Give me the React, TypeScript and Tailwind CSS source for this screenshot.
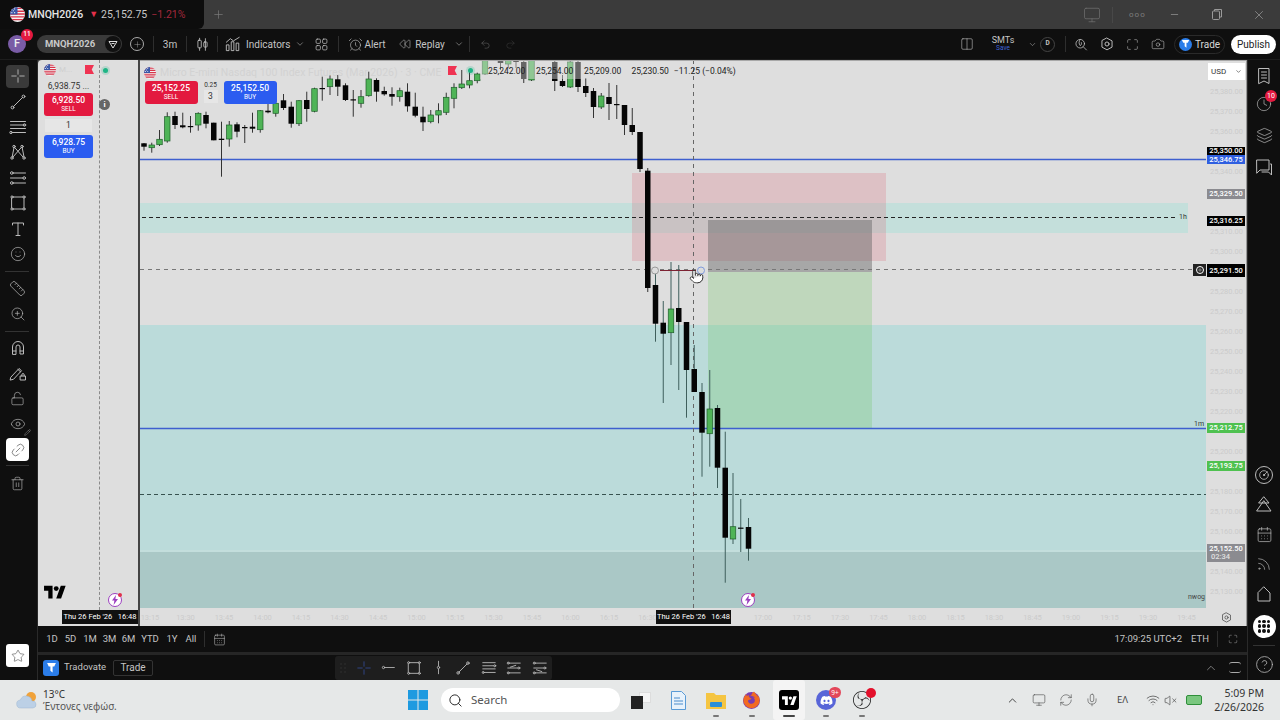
import type { ReactNode } from "react";
import {
  AlarmClock,
  CalendarDays,
  Camera,
  ChevronDown,
  ChevronUp,
  CircleHelp,
  Clock,
  Columns2,
  Eye,
  Layers,
  LockOpen,
  Maximize,
  Mic,
  Minus,
  Pencil,
  Pointer,
  Plus,
  Redo2,
  Rss,
  Ruler,
  Search,
  Smile,
  Star,
  Trash2,
  Undo2,
  VolumeX,
  Wifi,
  X,
  ZoomIn,
  Link2,
  Rewind,
  Monitor,
  RefreshCw,
} from "lucide-react";
import { SiObsstudio } from "react-icons/si";
import { FaDiscord, FaFirefoxBrowser } from "react-icons/fa";

// [index, bodyTop, bodyBottom, wickTop, wickBottom, colour]
type Bar = [number, number, number, number, number, "k" | "g"];

const bars: Bar[] = [
  [0, 143.3, 146.7, 143, 150.7, "k"],
  [1, 145, 147.7, 142.7, 152.7, "g"],
  [2, 139.3, 144.7, 130, 146, "g"],
  [3, 116.7, 141, 112.3, 142.7, "g"],
  [4, 116, 125, 111.7, 129, "k"],
  [5, 125.3, 127.3, 112.7, 128.3, "k"],
  [6, 126, 126.7, 116, 132.7, "k"],
  [7, 113.3, 125, 112.3, 130.7, "g"],
  [8, 115, 123.7, 111.7, 128.3, "k"],
  [9, 122.7, 140.3, 122.7, 140.3, "k"],
  [10, 138.7, 140, 121.7, 176.7, "k"],
  [11, 125, 139, 121, 146.7, "g"],
  [12, 124.3, 131.7, 122.3, 137.3, "k"],
  [13, 127, 128, 125, 143, "k"],
  [14, 126.7, 128.7, 112.7, 132.7, "k"],
  [15, 110.7, 129.7, 110, 132.7, "g"],
  [16, 110.7, 112.3, 103.3, 113.3, "k"],
  [17, 103.3, 113.3, 93.3, 116.7, "g"],
  [18, 100.3, 108, 94, 110, "k"],
  [19, 106.7, 123.7, 101.7, 127.7, "k"],
  [20, 100.7, 123.7, 100, 126, "g"],
  [21, 100, 109, 91.7, 121.7, "k"],
  [22, 88.7, 111.3, 87.7, 112.3, "g"],
  [23, 88, 88.7, 76.7, 100.7, "k"],
  [24, 79, 86.7, 75, 95, "g"],
  [25, 79.3, 86.7, 75, 96, "k"],
  [26, 85.3, 100, 83.3, 101, "k"],
  [27, 99.3, 100, 90, 116.7, "k"],
  [28, 96.7, 103.3, 90, 107.7, "g"],
  [29, 79, 95.7, 71.7, 96.7, "g"],
  [30, 80, 91.7, 78.3, 101.7, "k"],
  [31, 91, 94.3, 86.7, 95.7, "k"],
  [32, 94, 96.7, 87.3, 105.7, "k"],
  [33, 90.7, 96.7, 87.7, 101.7, "g"],
  [34, 91.7, 106.3, 83.3, 111.7, "k"],
  [35, 106.7, 115.7, 92.7, 117.3, "k"],
  [36, 116.7, 122.3, 106.7, 131, "k"],
  [37, 115, 121.7, 110, 123.3, "g"],
  [38, 110.7, 115, 103.3, 123.3, "g"],
  [39, 97.3, 112.3, 92.7, 115, "g"],
  [40, 87.3, 98.3, 83.3, 108.3, "g"],
  [41, 84, 87.7, 70, 89, "g"],
  [42, 80.7, 85, 69.3, 88.3, "g"],
  [43, 74, 80.7, 72.7, 83.3, "g"],
  [44, 55, 74, 55, 75, "g"],
  [46, 55, 63, 55, 70, "k"],
  [47, 55, 64, 55, 68, "g"],
  [48, 55, 62, 55, 68, "k"],
  [49, 62, 79, 55, 83, "k"],
  [50, 55, 80, 55, 81, "g"],
  [53, 62, 81, 55, 91, "k"],
  [54, 81, 86, 75, 87, "k"],
  [55, 62, 87, 55, 88, "g"],
  [56, 62, 87, 55, 92, "k"],
  [57, 86, 93, 78, 97, "k"],
  [58, 91, 107, 88, 118, "k"],
  [59, 96, 107, 93, 109, "g"],
  [60, 97, 104, 83, 120, "k"],
  [61, 104, 105, 85, 119, "k"],
  [62, 105, 125, 105, 135, "k"],
  [63, 125, 132, 108, 135, "k"],
  [64, 132, 169, 132, 172, "k"],
  [65, 170.7, 288, 168, 292, "k"],
  [66, 285, 323.7, 270, 341.7, "k"],
  [67, 322.7, 333.7, 301, 403, "k"],
  [68, 309, 332.7, 262, 365, "g"],
  [69, 308, 322, 265, 390, "k"],
  [70, 322, 370, 322, 417.7, "k"],
  [71, 369, 392, 345, 392, "k"],
  [72, 392, 432.7, 383, 476.7, "k"],
  [73, 409, 433.7, 370, 466.7, "g"],
  [74, 408, 467.7, 405, 488, "k"],
  [75, 467.7, 537.7, 431.7, 582.7, "k"],
  [76, 526.7, 539, 473, 544, "g"],
  [77, 527.6, 528.4, 499, 552, "k"],
  [78, 527, 548.7, 518, 560.7, "k"],
];

const priceY = (p: number) => 270 + (25291.5 - p) * 2;

const axisTags = [
  { text: "25,350.00", price: 25351.25, h: 8, bg: "bg-black" },
  { text: "25,346.75", price: 25346.75, h: 9, bg: "bg-[#2f5fe0]" },
  { text: "25,329.50", price: 25329.5, h: 10, bg: "bg-[#8b8b90]" },
  { text: "25,316.25", price: 25316.25, h: 10, bg: "bg-black" },
  { text: "25,291.50", price: 25291.25, h: 13, bg: "bg-black" },
  { text: "25,212.75", price: 25212.75, h: 10, bg: "bg-[#4fc150]" },
  { text: "25,193.75", price: 25193.75, h: 10, bg: "bg-[#4fc150]" },
];

const axisTicks = Array.from({ length: 26 }, (_, k) => 92 + k * 20).filter(
  (y) => !axisTags.some((t) => Math.abs(priceY(t.price) - y) < 11) && Math.abs(y - 553) > 11,
);

const timeTicks = ["13:15", "13:30", "13:45", "14:00", "14:15", "14:30", "14:45", "15:00", "15:15", "15:30", "15:45", "16:00", "16:15", "16:30", "", "", "17:00", "17:15", "17:30", "17:45", "18:00", "18:15", "18:30", "18:45", "19:00", "19:15", "19:30", "19:45"];

function Ico({ children, w = 18, h = 18, sw = 1 }: { children: ReactNode; w?: number; h?: number; sw?: number }) {
  return (
    <svg width={w} height={h} viewBox="0 0 18 18" fill="none" stroke="currentColor" strokeWidth={sw} strokeLinecap="round" strokeLinejoin="round">
      {children}
    </svg>
  );
}

function SettingsHex({ size = 14 }: { size?: number }) {
  return (
    <Ico w={size} h={size} sw={1.2}>
      <path d="M9 1.5 15.5 5v8L9 16.5 2.5 13V5z" />
      <circle cx="9" cy="9" r="2.6" />
    </Ico>
  );
}

function TvLogo({ size = 20, className }: { size?: number; className?: string }) {
  return (
    <svg width={size} height={size * 0.72} viewBox="0 0 36 26" className={className} fill="currentColor">
      <path d="M14 24H7V11H0V3h14v21zM28 24h-8l7.5-21h8L28 24z" />
      <circle cx="20" cy="7.5" r="4" />
    </svg>
  );
}

function UsFlag({ size = 12 }: { size?: number }) {
  return (
    <svg width={size} height={size} viewBox="0 0 16 16" className="rounded-full shrink-0">
      <rect width="16" height="16" fill="#f3f3f3" />
      <path d="M0 1.5h16M0 4.5h16M0 7.5h16M0 10.5h16M0 13.5h16" stroke="#d8344a" strokeWidth="1.5" />
      <rect width="8" height="8" fill="#3a58a8" />
      <path d="M2 2h.01M5 2h.01M3.5 4h.01M2 6h.01M5 6h.01" stroke="#fff" strokeWidth="1.2" strokeLinecap="round" />
    </svg>
  );
}

function RedFlag() {
  return (
    <svg width="9" height="9" viewBox="0 0 10 10" className="shrink-0">
      <path d="M0 0h10L7.5 5 10 10H0z" fill="#ef3352" />
    </svg>
  );
}

function LiveDot() {
  return <span className="block w-[5px] h-[5px] rounded-full bg-[#1fb585] ring-2 ring-[#1fb585]/20 shrink-0" />;
}

function BoltBadge() {
  return (
    <span className="relative w-[14px] h-[14px] rounded-full bg-white border border-[#9c3fc0] flex items-center justify-center">
      <svg width="8" height="10" viewBox="0 0 8 10" fill="#9c3fc0">
        <path d="M5 0 1 5.6h2.4L2.6 10 7 4H4.4z" />
      </svg>
      <span className="absolute -top-[1px] -right-[1px] w-[4px] h-[4px] rounded-full bg-[#e0304c]" />
    </span>
  );
}

function Divider() {
  return <span className="block w-px h-[16px] bg-[#2e2e2e] shrink-0" />;
}

function TitleBar() {
  return (
    <div className="h-[29px] flex bg-[#3b3b3b] shrink-0">
      <div className="w-[204px] bg-[#0d0d0d] rounded-br-[6px] flex items-center pl-[10px] text-[10.5px]">
        <UsFlag size={15} />
        <span className="ml-[3px] font-medium text-[#e4e4e4]">MNQH2026</span>
        <span className="ml-[6px] text-[#e5304a] text-[9px]">▼</span>
        <span className="ml-[3px] text-[#c8c8c8]">25,152.75</span>
        <span className="ml-[4px] text-[#a3283c]">−1.21%</span>
      </div>
      <div className="w-[28px] flex items-center justify-center text-[#7c7c7c]">
        <Plus size={13} strokeWidth={1.25} />
      </div>
      <div className="ml-auto flex items-center text-[#9a9a9a]">
        <Monitor size={18} strokeWidth={1} className="text-[#6f6f6f]" />
        <span className="w-px h-[16px] bg-[#484848] ml-[11px]" />
        <span className="w-[20px] ml-[16px] text-[8px] tracking-[1px] text-[#7d7d7d]">ooo</span>
        <span className="w-[43px] ml-[20px]">
          <Minus size={11} strokeWidth={1.5} />
        </span>
        <span className="w-[40px]">
          <svg width="10" height="11" viewBox="0 0 10 11" fill="none" stroke="currentColor">
            <rect x="0.5" y="2" width="7" height="8.5" rx="1" />
            <path d="M2.5 2V.5h7V8H8" />
          </svg>
        </span>
        <span className="w-[28px]">
          <X size={14} strokeWidth={1.25} />
        </span>
      </div>
    </div>
  );
}

function TopBar() {
  return (
    <div className="h-[31px] flex items-center shrink-0 bg-[#0f0f0f] text-[10px] text-[#c4c4c4] border-b border-[#1d1d1d]">
      <div className="relative ml-[8px] w-[18px] h-[18px] rounded-full bg-[#7a5ca6] flex items-center justify-center text-[11px] font-medium text-[#eee]">
        F
        <span className="absolute -top-[6px] -right-[7px] w-[12px] h-[12px] rounded-full bg-[#e3193f] text-white text-[6.5px] flex items-center justify-center">11</span>
      </div>
      <div className="ml-[11px] w-[85px] h-[18px] rounded-full bg-[#3a3a3a] flex items-center pl-[8px] pr-[1px] justify-between font-bold text-[#c9c9c9] text-[9.5px]">
        MNQH2026
        <span className="w-[16px] h-[16px] rounded-full bg-[#111] flex items-center justify-center">
          <svg width="10" height="9" viewBox="0 0 10 9" fill="none" stroke="#ddd" strokeWidth="1">
            <path d="M1 1.5h8L5 8zM3.5 3.5h3" />
          </svg>
        </span>
      </div>
      <span className="ml-[8px] w-[14px] h-[14px] rounded-full border border-[#aaa] flex items-center justify-center">
        <Plus size={9} strokeWidth={1} />
      </span>
      <span className="ml-[9px]"><Divider /></span>
      <span className="w-[32px] text-center">3m</span>
      <Divider />
      <span className="w-[30px] flex justify-center">
        <Ico w={15} h={15}>
          <rect x="3.5" y="4" width="4" height="9" rx="0.8" />
          <path d="M5.5 1.5V4M5.5 13v3M12.5 2v14" />
          <rect x="10.5" y="6" width="4" height="6" rx="0.8" />
        </Ico>
      </span>
      <Divider />
      <span className="ml-[7px] w-[16px]">
        <Ico w={16} h={16}>
          <path d="M1.5 16V10h3v6zM7 16V6.5h3V16zM12.5 16V8h3v8z" />
          <path d="M1.5 7 6 3l3.5 2.5L16 1.5" />
        </Ico>
      </span>
      <span className="ml-[5px] w-[41px] text-center">Indicators</span>
      <span className="ml-[8px] w-[13px]"><ChevronDown size={10} strokeWidth={1.25} /></span>
      <span className="ml-[7px] w-[14px]">
        <Ico w={13} h={13}>
          <rect x="1.5" y="1.5" width="6" height="6" rx="1.6" />
          <rect x="10.5" y="1.5" width="6" height="6" rx="1.6" />
          <rect x="1.5" y="10.5" width="6" height="6" rx="1.6" />
          <rect x="10.5" y="10.5" width="6" height="6" rx="1.6" />
        </Ico>
      </span>
      <span className="ml-[9px]"><Divider /></span>
      <span className="ml-[9px] w-[16px]"><AlarmClock size={15} strokeWidth={1} /></span>
      <span className="w-[22px] text-center">Alert</span>
      <span className="ml-[13px] w-[12px]"><Rewind size={12} strokeWidth={1.1} /></span>
      <span className="ml-[2.5px] w-[33px] text-center">Replay</span>
      <span className="ml-[7.5px] w-[15px]"><ChevronDown size={10} strokeWidth={1.25} /></span>
      <Divider />
      <span className="ml-[10px] w-[25px] text-[#777]"><Undo2 size={11} strokeWidth={1} /></span>
      <span className="w-[12px] text-[#444]"><Redo2 size={11} strokeWidth={1} /></span>

      <div className="ml-auto flex items-center">
        <Columns2 size={14} strokeWidth={1} />
        <div className="ml-[17px] w-[24px] flex flex-col items-center leading-[8px]">
          <span className="text-[9px]">SMTs</span>
          <span className="text-[6.5px] text-[#3f62d8]">Save</span>
        </div>
        <span className="ml-[13px]"><ChevronDown size={9} strokeWidth={1.25} /></span>
        <span className="ml-[3px] w-[15px] h-[15px] rounded-full border border-[#444] flex items-center justify-center text-[6.5px] font-bold">D</span>
        <span className="ml-[10px]"><Divider /></span>
        <span className="ml-[8px]">
          <Ico w={14} h={15}>
            <circle cx="8" cy="8" r="5.5" />
            <path d="m12 12 4 4M8 2.5c-2 2.5-2 5.5 0 8 1.500-1 2-2.500 1.500-4" />
          </Ico>
        </span>
        <span className="ml-[12px]"><SettingsHex /></span>
        <span className="ml-[12px]"><Maximize size={13} strokeWidth={1} /></span>
        <span className="ml-[12px]"><Camera size={14} strokeWidth={1} /></span>
        <div className="ml-[9px] w-[51px] h-[19px] rounded-full border border-[#2a2a2a] flex items-center pl-[4px] gap-[3px] text-[#d8d8d8]">
          <TradovateMark size={13} />
          Trade
        </div>
        <div className="ml-[6px] mr-[4px] w-[45px] h-[19px] rounded-full bg-white text-[#222] flex items-center justify-center">Publish</div>
      </div>
    </div>
  );
}

function TradovateMark({ size }: { size: number }) {
  return (
    <span className="rounded-full bg-[#2b7de9] flex items-center justify-center shrink-0" style={{ width: size, height: size }}>
      <svg width={size * 0.7} height={size * 0.7} viewBox="0 0 10 10" fill="#fff">
        <path d="M1 1h8L7.5 4H6v5.5L4 8V4H2.5z" />
      </svg>
    </span>
  );
}

function ToolBtn({ children, active }: { children: ReactNode; active?: "dark" | "white" }) {
  return (
    <div className="w-[35px] h-[25.4px] flex items-center justify-center text-[#bcbcbc]">
      {active ? (
        <div className={`w-[23px] h-[23px] rounded-[4px] flex items-center justify-center ${active === "dark" ? "bg-[#3a3a3a]" : "bg-white text-[#666]"}`}>{children}</div>
      ) : (
        children
      )}
    </div>
  );
}

function LeftTools() {
  return (
    <div className="w-[38px] shrink-0 bg-[#0f0f0f] flex flex-col items-start pt-[3.5px] border-r border-[#2a2a2a]">
      <ToolBtn active="dark">
        <Ico w={16} h={16}>
          <path d="M9 2v5M9 11v5M2 9h5M11 9h5" />
        </Ico>
      </ToolBtn>
      <ToolBtn>
        <Ico>
          <circle cx="3.5" cy="14.5" r="1.4" />
          <circle cx="14.5" cy="3.5" r="1.4" />
          <path d="M4.500 13.500l9-9" />
        </Ico>
      </ToolBtn>
      <ToolBtn>
        <Ico>
          <path d="M1.5 3.5h15M1.5 7h14M1.5 10.5h15M3.500 14.500h13" />
          <circle cx="2" cy="14.5" r="1.2" />
          <circle cx="15.5" cy="7" r="1.2" />
        </Ico>
      </ToolBtn>
      <ToolBtn>
        <Ico>
          <circle cx="3" cy="15" r="1.2" />
          <circle cx="5" cy="3.5" r="1.2" />
          <circle cx="13" cy="3.5" r="1.2" />
          <circle cx="15" cy="15" r="1.2" />
          <path d="M3.2 13.800 5 4.700M5.700 4.500 14 14M12.300 4.500 4 14M13.200 4.700 15 13.800" />
        </Ico>
      </ToolBtn>
      <ToolBtn>
        <Ico>
          <circle cx="2.8" cy="4" r="1.3" />
          <circle cx="15.2" cy="9" r="1.3" />
          <circle cx="2.8" cy="14" r="1.3" />
          <path d="M4 4h12.500M1.500 9H14M4 14h12.500" />
        </Ico>
      </ToolBtn>
      <ToolBtn>
        <Ico>
          <rect x="3" y="3" width="12" height="12" />
          <circle cx="3" cy="3" r="1.1" fill="#0f0f0f" />
          <circle cx="15" cy="3" r="1.1" fill="#0f0f0f" />
          <circle cx="3" cy="15" r="1.1" fill="#0f0f0f" />
          <circle cx="15" cy="15" r="1.1" fill="#0f0f0f" />
        </Ico>
      </ToolBtn>
      <ToolBtn>
        <Ico>
          <path d="M3.500 5V3h11v2M9 3v12.500M7 15.500h4" />
        </Ico>
      </ToolBtn>
      <ToolBtn><Smile size={16} strokeWidth={1} /></ToolBtn>
      <div className="ml-[5px] mt-[4px] w-[24px] h-px bg-[#333]" />
      <div className="mt-[4.5px]">
        <ToolBtn><Ruler size={17} strokeWidth={1} /></ToolBtn>
      </div>
      <ToolBtn><ZoomIn size={16} strokeWidth={1} /></ToolBtn>
      <div className="ml-[5px] mt-[4px] w-[24px] h-px bg-[#333]" />
      <div className="mt-[3.5px]">
        <ToolBtn>
          <Ico>
            <path d="M3.500 15V8a5.500 5.500 0 0 1 11 0v7h-3.500V8a2 2 0 0 0-4 0v7zM3.500 12H7M11 12h3.500" />
          </Ico>
        </ToolBtn>
      </div>
      <ToolBtn>
        <Ico>
          <path d="m2 13 8-8.500 2.500 2.200-8 8.600-3 .7zM9 5.500l2.500 2.300" />
          <rect x="11.5" y="12" width="5" height="4" />
          <path d="M12.800 12v-1.200a1.200 1.200 0 0 1 2.400 0V12" />
        </Ico>
      </ToolBtn>
      <ToolBtn><LockOpen size={15} strokeWidth={1} /></ToolBtn>
      <ToolBtn>
        <div className="relative">
          <Eye size={16} strokeWidth={1} />
          <Pencil size={7} strokeWidth={1.25} className="absolute -bottom-[4px] -right-[5px]" />
        </div>
      </ToolBtn>
      <ToolBtn active="white"><Link2 size={16} strokeWidth={1.1} className="-rotate-45" /></ToolBtn>
      <div className="ml-[6px] mt-[3px] w-[23px] h-px bg-[#333]" />
      <div className="mt-[4.5px]">
        <ToolBtn><Trash2 size={15} strokeWidth={1} /></ToolBtn>
      </div>
      <div className="mt-auto mb-[13px] ml-[6px] w-[23px] h-[23px] rounded-[3px] bg-white flex items-center justify-center text-[#444]">
        <Star size={14} strokeWidth={1} />
      </div>
    </div>
  );
}

function MiniPanel() {
  return (
    <div className="relative w-[100px] shrink-0 bg-[#dedede] rounded-tl-[4px] overflow-hidden">
      <div className="absolute left-[61px] top-0 bottom-[16px] border-l border-dashed border-[#8a8a8a]" />
      <div className="relative flex flex-col items-center w-[61px]">
        <div className="w-full h-[19px] pl-[6px] pr-[5px] flex items-center">
          <UsFlag size={12} />
          <span className="ml-[3px] text-[8px] text-[#cfcfcf]">M...</span>
          <span className="ml-auto"><RedFlag /></span>
        </div>
        <div className="h-[14px] text-[8.5px] text-[#333] flex items-center">6,938.75 ...</div>
        <div className="w-[49px] h-[23px] rounded-[3px] bg-[#e3193f] text-white flex flex-col items-center justify-center leading-[9px]">
          <span className="text-[8.5px] font-medium">6,928.50</span>
          <span className="text-[6.5px]">SELL</span>
        </div>
        <div className="my-[3px] w-[47px] h-[13px] bg-[#e6e6e6] text-[8.5px] text-[#333] flex items-center justify-center">1</div>
        <div className="w-[49px] h-[23px] rounded-[3px] bg-[#2b5cf0] text-white flex flex-col items-center justify-center leading-[9px]">
          <span className="text-[8.5px] font-medium">6,928.75</span>
          <span className="text-[6.5px]">BUY</span>
        </div>
      </div>
      <div className="absolute left-[65px] top-[8px]"><LiveDot /></div>
      <div className="absolute left-[61px] top-[39px] w-[11px] h-[11px] rounded-full bg-[#666] text-white text-[8px] font-bold leading-none flex items-center justify-center">i</div>
      <div className="absolute left-[6px] bottom-[26px] text-black"><TvLogo size={22} /></div>
      <div className="absolute left-[70px] bottom-[19px]"><BoltBadge /></div>
      <div className="absolute left-[24px] right-0 bottom-[2px] h-[14px] bg-[#111] text-white text-[7.5px] flex items-center justify-center whitespace-pre">Thu 26 Feb '26   16:48</div>
    </div>
  );
}

function ChartCanvas() {
  return (
    <svg className="absolute inset-0" width="1107" height="566" viewBox="140 60 1107 566">
      <rect x="140" y="203" width="1048" height="30" fill="#c4dfdb" />
      <rect x="140" y="325" width="1066" height="227" fill="#bbdbda" />
      <rect x="140" y="552" width="1066" height="56" fill="#aac8c6" />
      <rect x="140" y="550" width="1066" height="2" fill="#c3dedc" />
      <rect x="632" y="173" width="254" height="88" fill="rgba(220,90,110,0.22)" />
      <rect x="708" y="220" width="164" height="52" fill="rgba(100,100,100,0.45)" />
      <rect x="708" y="272" width="164" height="156" fill="rgba(120,200,110,0.3)" />
      <path d="M140 159.5H1206M140 428.5H1206" stroke="#3e5fcf" strokeWidth="1.3" />
      <path d="M142 217.5H1176" stroke="#222" strokeDasharray="4 3" />
      <path d="M140 269.5H1193" stroke="#777" strokeDasharray="4 4" />
      <path d="M140 494.5H1206" stroke="#37524f" strokeDasharray="4 3" />
      <path d="M693.5 60V609" stroke="#666" strokeDasharray="4 4" />
      {bars.map(([i, top, bottom, wTop, wBot, c]) => {
        const x = 144 + i * 7.75;
        return (
          <g key={i}>
            <path d={`M${x} ${wTop}V${wBot}`} stroke={wBot > 300 ? "#3f5f5c" : "#333"} strokeWidth="1" />
            <rect
              x={x - 2.75}
              y={top}
              width="5.5"
              height={Math.max(bottom - top, 1.2)}
              fill={c === "g" ? "#4fb457" : "#050505"}
              stroke={c === "g" ? "#1e5f2a" : "none"}
              strokeWidth="0.7"
            />
          </g>
        );
      })}
      {/* legend backdrop fades the candles behind the values */}
      <rect x="480" y="60" width="125" height="19" fill="rgba(222,222,222,0.45)" />
      <path d="M140 60.5H1247" stroke="#a8a8a8" />
      <path d="M660 270.5H696" stroke="#7d2333" strokeWidth="1.2" />
      <circle cx="655" cy="270.5" r="3.5" fill="#ddd" stroke="#999" />
      <circle cx="701" cy="270.5" r="3.5" fill="#ddd" stroke="#7f9bdc" />
    </svg>
  );
}

function MainChart() {
  return (
    <div className="relative flex-1 bg-[#dedede] overflow-hidden border-r border-[#9a9a9a]">
      <ChartCanvas />

      {/* legend */}
      <div className="absolute left-[4px] top-[5px] w-[336px] flex items-center text-[10.5px] text-[#d2d2d2] whitespace-nowrap">
        <UsFlag size={12} />
        <span className="ml-[4px]">Micro E-mini Nasdaq 100 Index Futures (Mar 2026) · 3 · CME</span>
      </div>
      <div className="absolute left-[308px] top-[6px]"><RedFlag /></div>
      <div className="absolute left-[328px] top-[8px]"><LiveDot /></div>
      <div className="absolute left-[348px] top-[5px] h-[12px] flex items-center text-[8.5px] text-[#222] whitespace-nowrap">
        <span className="w-[48px]">25,242.00</span>
        <span className="w-[48px]">25,254.00</span>
        <span className="w-[47.5px]">25,209.00</span>
        <span>25,230.50</span>
        <span className="ml-[5px]">−11.25 (−0.04%)</span>
      </div>

      {/* order buttons */}
      <div className="absolute left-[4.5px] top-[21px] flex items-start">
        <div className="w-[53px] h-[23px] rounded-[3px] bg-[#e3193f] text-white flex flex-col items-center justify-center leading-[9px]">
          <span className="text-[8.5px] font-medium">25,152.25</span>
          <span className="text-[6.5px]">SELL</span>
        </div>
        <div className="w-[26px] flex flex-col items-center leading-none text-[#333]">
          <span className="text-[6.5px] h-[9px] flex items-center">0.25</span>
          <span className="w-[14px] h-[13px] bg-[#e6e6e6] text-[8.5px] flex items-center justify-center">3</span>
        </div>
        <div className="w-[53px] h-[23px] rounded-[3px] bg-[#2b5cf0] text-white flex flex-col items-center justify-center leading-[9px]">
          <span className="text-[8.5px] font-medium">25,152.50</span>
          <span className="text-[6.5px]">BUY</span>
        </div>
      </div>

      {/* price axis */}
      <div className="absolute left-[1068px] top-[3px] w-[37px] h-[17px] bg-white text-[#333] text-[8px] flex items-center justify-between px-[3px]">
        USD
        <ChevronDown size={7} />
      </div>
      {axisTicks.map((y) => (
        <span
          key={y}
          className="absolute left-[1068px] w-[37px] text-center text-[7.5px] leading-[10px] text-[#cbcbcb]"
          style={{ top: y - 65 }}
        >
          25,{380 - ((y - 92) / 20) * 10}.00
        </span>
      ))}
      {axisTags.map((t) => (
        <span
          key={t.text}
          className={`absolute left-[1067px] w-[38px] flex items-center justify-center text-[7.5px] font-medium text-white ${t.bg}`}
          style={{ top: priceY(t.price) - 60 - t.h / 2, height: t.h }}
        >
          {t.text}
        </span>
      ))}
      <span className="absolute left-[1067px] top-[484px] w-[38px] h-[18px] bg-[#8b8b90] text-white text-[7.5px] font-medium flex flex-col items-center justify-center leading-[8.5px]">
        25,152.50
        <span className="w-full pl-[4px] text-[#e0e0e0]">02:34</span>
      </span>
      <span className="absolute left-[1053px] top-[204px] w-[13px] h-[12px] bg-[#222] text-white flex items-center justify-center">
        <span className="w-[8px] h-[8px] rounded-full border border-white flex items-center justify-center">
          <Plus size={6} strokeWidth={1.5} />
        </span>
      </span>
      <span className="absolute left-[1039px] top-[152px] text-[7px] text-[#333]">1h</span>
      <span className="absolute left-[1054px] top-[359px] text-[7px] text-[#333]">1m</span>
      <span className="absolute left-[1048px] top-[532px] text-[7px] text-[#444]">nwog</span>

      {/* cursor */}
      <Pointer size={15} strokeWidth={1.25} fill="#fff" className="absolute left-[549px] top-[209px] text-[#111]" />
      <div className="absolute left-[601px] top-[533px]"><BoltBadge /></div>

      {/* time axis */}
      {timeTicks.map((t, k) => (
        <span
          key={k}
          className="absolute top-[552px] w-[24px] text-center text-[7.5px] text-[#cbcbcb]"
          style={{ left: Math.max(k * 38.5 - 5, -2) }}
        >
          {t}
        </span>
      ))}
      <div className="absolute left-[516px] top-[550px] w-[75px] h-[14px] bg-[#111] text-white text-[7.5px] flex items-center justify-center whitespace-pre">Thu 26 Feb '26   16:48</div>
      <span className="absolute left-[1081px] top-[552px] text-[#444]"><SettingsHex size={11} /></span>
    </div>
  );
}

function RangeBar() {
  const ranges = [
    ["1D", "w-[18px]"],
    ["5D", "w-[19px]"],
    ["1M", "w-[20px]"],
    ["3M", "w-[19px]"],
    ["6M", "w-[19px]"],
    ["YTD", "w-[24px]"],
    ["1Y", "w-[20px]"],
    ["All", "w-[18px]"],
  ];
  return (
    <div className="h-[26px] flex items-center text-[9.5px] text-[#c4c4c4] pl-[5px] pr-[7px]">
      {ranges.map(([r, w]) => (
        <span key={r} className={`${w} text-center`}>{r}</span>
      ))}
      <span className="ml-[4px]"><Divider /></span>
      <span className="ml-[8px]"><CalendarDays size={13} strokeWidth={1} /></span>
      <span className="ml-auto">17:09:25 UTC+2</span>
      <span className="ml-[9px]">ETH</span>
      <span className="ml-[8px]"><Divider /></span>
      <span className="ml-[10px] w-[12px]"><Maximize size={10} strokeWidth={1} /></span>
    </div>
  );
}

function DrawBar() {
  return (
    <div className="h-[25px] flex items-center text-[#c4c4c4] pl-[5px] pr-[6px]">
      <span className="w-[16px] h-[16px] rounded-[3px] bg-[#2b7de9] flex items-center justify-center">
        <svg width="11" height="11" viewBox="0 0 10 10" fill="#fff">
          <path d="M1 1h8L7.5 4H6v5.5L4 8V4H2.5z" />
        </svg>
      </span>
      <span className="ml-[5px] w-[41px] text-[9.5px] whitespace-nowrap">Tradovate</span>
      <span className="ml-[8px] w-[40px] h-[16px] rounded-[2px] border border-[#333] text-[10px] flex items-center justify-center">Trade</span>
      <div className="ml-[182px] w-[217px] h-[24px] bg-[#1e1e1e] rounded-[3px] flex items-center pl-[2px] text-[#bdbdbd]">
        <span className="w-[12px] text-[#555]">
          <Ico w={12} h={12} sw={1.2}>
            <path d="M6 3v.01M12 3v.01M6 9v.01M12 9v.01M6 15v.01M12 15v.01" strokeDasharray="1 1" />
          </Ico>
        </span>
        <span className="w-[26px] ml-[2px] flex justify-center text-[#32498f]">
          <Ico w={16} h={16}>
            <path d="M9 2v5M9 11v5M2 9h5M11 9h5" />
          </Ico>
        </span>
        <span className="w-[24px] flex justify-center">
          <Ico w={15} h={15}>
            <circle cx="3" cy="9" r="1.4" />
            <path d="M4.500 9H16" />
          </Ico>
        </span>
        <span className="w-[26px] flex justify-center">
          <Ico w={16} h={16}>
            <rect x="3" y="3" width="12" height="12" />
            <circle cx="3" cy="3" r="1.1" fill="#1e1e1e" />
            <circle cx="15" cy="3" r="1.1" fill="#1e1e1e" />
            <circle cx="3" cy="15" r="1.1" fill="#1e1e1e" />
            <circle cx="15" cy="15" r="1.1" fill="#1e1e1e" />
          </Ico>
        </span>
        <span className="w-[24px] flex justify-center">
          <Ico w={15} h={15}>
            <path d="M9 1.500v5.500M9 11v5.500" />
            <circle cx="9" cy="9" r="1.4" />
          </Ico>
        </span>
        <span className="w-[26px] flex justify-center">
          <Ico w={16} h={16}>
            <circle cx="3.5" cy="14.5" r="1.4" />
            <circle cx="14.5" cy="3.5" r="1.4" />
            <path d="M4.500 13.500l9-9" />
          </Ico>
        </span>
        <span className="w-[25px] flex justify-center">
          <Ico w={16} h={16}>
            <path d="M2 3h14M2 6.500h12M2 10h14M4 14h12" />
            <circle cx="15.5" cy="6.5" r="1.1" />
            <circle cx="2.5" cy="14" r="1.1" />
          </Ico>
        </span>
        <span className="w-[26px] flex justify-center">
          <Ico w={16} h={16}>
            <path d="M4 3.500h12M2 9h11M4 14.500h12M5 8l6-2" />
            <circle cx="2.5" cy="3.5" r="1.1" />
            <circle cx="14.5" cy="9" r="1.1" />
            <circle cx="2.5" cy="14.5" r="1.1" />
          </Ico>
        </span>
        <span className="w-[25px] flex justify-center">
          <Ico w={16} h={16}>
            <path d="M4 3.500h12M2 9h11M4 14.500h12M5 11l6 2" />
            <circle cx="2.5" cy="3.5" r="1.1" />
            <circle cx="14.5" cy="9" r="1.1" />
            <circle cx="2.5" cy="14.5" r="1.1" />
          </Ico>
        </span>
      </div>
      <span className="ml-auto mr-[11px]"><ChevronUp size={14} strokeWidth={1} /></span>
      <span className="w-[12px] h-[11px] rounded-[3px] border-x-0 border-y border-[#aaa]" />
    </div>
  );
}

function RightBar() {
  return (
    <div className="w-[33px] shrink-0 bg-[#0f0f0f] flex flex-col items-center pt-[6px] text-[#bdbdbd] border-l border-[#2a2a2a]">
      <span className="h-[20px] flex items-center">
        <Ico w={18} h={20}>
          <path d="M4 1.500h10v15l-5-2.500-5 2.500zM6.500 5h5M6.500 8h5M6.500 11h5" />
        </Ico>
      </span>
      <span className="relative mt-[8px] h-[20px] flex items-center">
        <Clock size={16} strokeWidth={1} />
        <span className="absolute -top-[4px] -right-[5px] w-[12px] h-[12px] rounded-full bg-[#e3193f] text-white text-[7px] flex items-center justify-center">10</span>
      </span>
      <span className="mt-[13px]"><Layers size={17} strokeWidth={1} /></span>
      <span className="mt-[14px]">
        <Ico w={18} h={18}>
          <path d="M2 2h12v10H5l-3 3zM15.500 6H16.500v11l-3-3H7" />
        </Ico>
      </span>
      <div className="mt-auto flex flex-col items-center">
        <span className="w-[18px] h-[18px] rounded-full border border-[#bbb] flex items-center justify-center">
          <Ico w={12} h={12} sw={1.2}>
            <circle cx="9" cy="9" r="6.5" />
            <path d="M9 9l5-5" />
            <circle cx="9" cy="9" r="1" fill="currentColor" />
          </Ico>
        </span>
        <span className="mt-[11px]">
          <Ico w={18} h={18}>
            <path d="M9 2l5 6H4zM9 6l7 10H2z" />
          </Ico>
        </span>
        <span className="mt-[12.5px]"><CalendarDays size={17} strokeWidth={1} /></span>
        <span className="mt-[13.5px]"><Rss size={16} strokeWidth={1} /></span>
        <span className="mt-[13px]">
          <Ico w={18} h={18}>
            <path d="M9 2l6 6v8H3V8z" />
          </Ico>
        </span>
        <span className="mt-[11.5px] w-[23px] h-[23px] rounded-full bg-white grid grid-cols-3 gap-[1.5px] p-[5px]">
          {Array.from({ length: 9 }, (_, i) => (
            <span key={i} className="rounded-full bg-[#111]" />
          ))}
        </span>
        <span className="mt-[7px] w-[22px] h-px bg-[#333]" />
        <span className="mt-[9.5px] mb-[6px]"><CircleHelp size={19} strokeWidth={1} /></span>
      </div>
    </div>
  );
}

function RunDot({ className }: { className: string }) {
  return <span className={`absolute bottom-[3px] h-[2px] rounded-full ${className}`} />;
}

function Taskbar() {
  return (
    <div className="h-[40px] shrink-0 bg-[#e6e8e8] flex items-center text-[#333] font-['Noto_Sans',sans-serif]">
      <svg width="24" height="20" viewBox="0 0 24 20" className="ml-[15px]">
        <circle cx="16" cy="7" r="5" fill="#f0a23a" />
        <path d="M6 18a4 4 0 0 1-.6-8A6 6 0 0 1 17 11a3.500 3.500 0 0 1 1 7z" fill="#bcd0e6" stroke="#9fb6d1" strokeWidth="0.5" />
      </svg>
      <div className="ml-[4px] w-[74px] leading-[12.5px] whitespace-nowrap">
        <div className="text-[10px]">13°C</div>
        <div className="text-[10px] text-[#555]">Έντονες νεφώσ.</div>
      </div>
      <svg width="20" height="20" viewBox="0 0 20 20" className="ml-[291px]">
        <path d="M0 0h9.500v9.500H0zM10.500 0H20v9.500h-9.500zM0 10.500h9.500V20H0zM10.500 10.500H20V20h-9.500z" fill="#1d9ae0" />
      </svg>
      <div className="ml-[13px] w-[179px] h-[24px] rounded-full bg-white flex items-center pl-[7px] text-[11.5px] text-[#555]">
        <Search size={15} strokeWidth={1.5} className="text-[#222]" />
        <span className="ml-[8px]">Search</span>
      </div>
      <div className="ml-[11px] w-[20px] h-[17px] relative">
        <span className="absolute right-0 top-0 w-[12px] h-[11px] bg-[#f5f5f5] border border-[#ddd]" />
        <span className="absolute left-0 bottom-0 w-[12px] h-[13px] bg-[#222]" />
      </div>
      <svg width="15" height="19" viewBox="0 0 15 19" className="ml-[20px]">
        <path d="M.5.5h10l4 4v14H.5z" fill="#e8f2fb" stroke="#5a9bd6" />
        <path d="M3 7h6M3 10h9M3 13h9" stroke="#4a8ccc" />
      </svg>
      <span className="relative ml-[20px] h-[40px] flex items-center">
        <svg width="20" height="18" viewBox="0 0 20 18">
          <path d="M0 2h8l2 2h10v14H0z" fill="#f5c542" />
          <rect x="4" y="11" width="12" height="5" rx="1" fill="#2b8fd8" />
        </svg>
        <RunDot className="left-[7px] w-[6px] bg-[#777]" />
      </span>
      <span className="relative ml-[17px] h-[40px] flex items-center">
        <span className="w-[17px] h-[17px] rounded-full bg-[#7b3bb0] flex items-center justify-center text-[#f26a21]">
          <FaFirefoxBrowser size={18} />
        </span>
        <RunDot className="left-[6px] w-[6px] bg-[#777]" />
      </span>
      <div className="relative ml-[13px] w-[32px] h-[40px] bg-[#f4f4f4] rounded-[3px] flex items-center justify-center">
        <span className="w-[20px] h-[20px] rounded-[3px] bg-black text-white flex items-center justify-center">
          <TvLogo size={15} />
        </span>
        <RunDot className="left-[10px] w-[12px] bg-[#444]" />
      </div>
      <span className="relative ml-[11px] h-[40px] flex items-center">
        <span className="w-[20px] h-[20px] rounded-full bg-[#5865d8] text-white flex items-center justify-center">
          <FaDiscord size={13} />
        </span>
        <span className="absolute top-[7px] -right-[5px] w-[12px] h-[11px] rounded-full bg-[#e3475a] text-white text-[6.5px] flex items-center justify-center">9+</span>
        <RunDot className="left-[7px] w-[6px] bg-[#777]" />
      </span>
      <span className="relative ml-[17px] h-[40px] flex items-center text-[#222]">
        <SiObsstudio size={18} />
        <span className="absolute top-[8px] -right-[5px] w-[10px] h-[10px] rounded-full bg-[#e3102b]" />
        <RunDot className="left-[6px] w-[6px] bg-[#777]" />
      </span>
      <div className="ml-auto flex items-center text-[#444]">
        <ChevronUp size={13} strokeWidth={1.5} className="text-[#222]" />
        <span className="ml-[13px]"><Monitor size={14} strokeWidth={1} /></span>
        <span className="ml-[13px]"><RefreshCw size={14} strokeWidth={1} /></span>
        <span className="ml-[12px]"><Mic size={14} strokeWidth={1} /></span>
        <span className="ml-[18px] text-[9.5px]">ΕΛ</span>
        <span className="ml-[18px]"><Wifi size={14} strokeWidth={1.25} /></span>
        <span className="ml-[4px]"><VolumeX size={13} strokeWidth={1.25} /></span>
        <span className="ml-[9px] w-[16px] h-[10px] rounded-[2px] border border-[#2f8f3a] bg-[#7ac77f]" />
        <div className="ml-[12px] mr-[16px] flex flex-col items-end leading-[14px] text-[10.5px] text-[#333]">
          <span>5:09 PM</span>
          <span>2/26/2026</span>
        </div>
      </div>
    </div>
  );
}

export default function App() {
  return (
    <div className="w-[1280px] h-[720px] overflow-hidden flex flex-col bg-[#0f0f0f] font-[Roboto,sans-serif]">
      <TitleBar />
      <TopBar />
      <div className="flex h-[620px] shrink-0">
        <LeftTools />
        <div className="flex-1 flex flex-col min-w-0">
          <div className="h-[566px] flex gap-[2px] bg-[#444] shrink-0">
            <MiniPanel />
            <MainChart />
          </div>
          <RangeBar />
          <div className="h-[3px] bg-[#262626]" />
          <DrawBar />
        </div>
        <RightBar />
      </div>
      <Taskbar />
    </div>
  );
}
